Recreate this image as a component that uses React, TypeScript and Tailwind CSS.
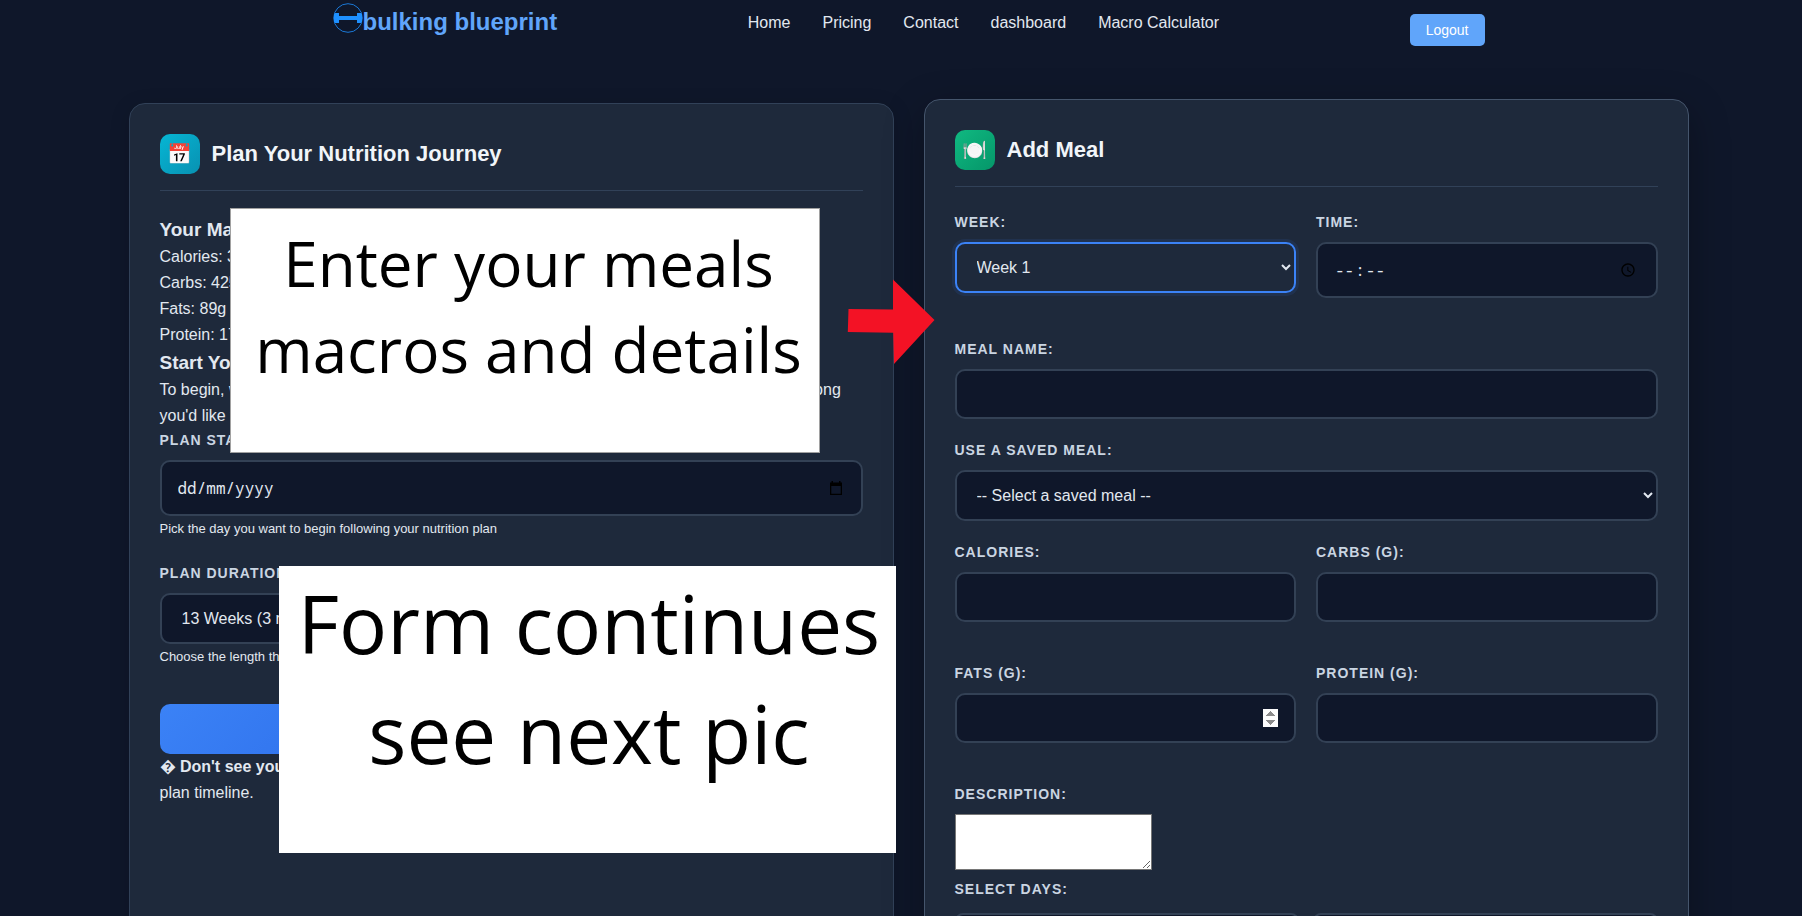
import type { ReactNode } from "react";

const fieldBase =
  "block w-full rounded-[10px] border-2 border-[#334155] bg-[#0f172a] px-4 text-base text-slate-200 outline-none";

const navLinks = ["Home", "Pricing", "Contact", "dashboard", "Macro Calculator"];
const days = ["Monday", "Tuesday", "Wednesday", "Thursday", "Friday", "Saturday", "Sunday"];

function Logo() {
  return (
    <svg width="30" height="30" viewBox="0 0 30 30" fill="none" aria-hidden="true">
      <circle cx="15" cy="15" r="14.3" stroke="#1e90ff" strokeOpacity="0.8" />
      <rect x="5" y="13" width="19" height="4" fill="#1e90ff" />
      <path d="M2 10h4v10H2zM24 10h4v10h-4zM1 11h1v8H1zM28 11h1v8h-1z" fill="#1e90ff" />
    </svg>
  );
}

function CalendarIcon() {
  return (
    <svg width="14" height="15" viewBox="0 0 14 15" aria-hidden="true">
      <path d="M2.500 0H4v1.500h6V0h1.500v1.500H13V14H1V1.500h1.500zM2.300 5v7.700h9.400V5z" fill="#000" fillRule="evenodd" />
    </svg>
  );
}

function Field({ id, label, children }: { id: string; label: string; children: ReactNode }) {
  return (
    <div className="mb-5">
      <label
        htmlFor={id}
        className="mb-2 block text-sm leading-[23px] font-semibold tracking-[1px] text-slate-300 uppercase"
      >
        {label}
      </label>
      {children}
    </div>
  );
}

function CardHeader({ icon, title, tint }: { icon: string; title: string; tint: string }) {
  return (
    <div className="mb-6 flex items-center gap-3 border-b border-slate-700 pb-4">
      <span className={`flex size-10 items-center justify-center rounded-[10px] bg-linear-135 text-xl ${tint}`}>
        {icon}
      </span>
      <h2 className="text-[22px] leading-7 font-semibold text-slate-100">{title}</h2>
    </div>
  );
}

function PlanCard() {
  return (
    <section className="rounded-2xl border border-slate-700 bg-[#1e293b] p-[30px] shadow-[0_4px_20px_rgba(0,0,0,0.15)]">
      <CardHeader icon="📅" title="Plan Your Nutrition Journey" tint="from-[#06b6d4] to-[#0891b2]" />

      <h3 className="text-[19px] leading-[29px] font-bold">Your Macro Targets</h3>
      <p>Calories: 3200</p>
      <p>Carbs: 425g</p>
      <p>Fats: 89g</p>
      <p>Protein: 175g</p>
      <h3 className="text-[19px] leading-[29px] font-bold">Start Your Plan</h3>
      <p>
        To begin, we need to know when you want to start following your nutrition plan and just how long
        you'd like your plan to last.
      </p>

      <Field id="start" label="Plan Start Date:">
        <div className="flex h-14 items-center rounded-[10px] border-2 border-[#334155] bg-[#0f172a] pr-[18px] pl-4">
          <input
            id="start"
            type="text"
            placeholder="dd/mm/yyyy"
            className="min-w-0 flex-1 bg-transparent font-['Noto_Sans_Mono','DejaVu_Sans_Mono',monospace] text-base text-slate-200 outline-none placeholder:text-slate-200"
          />
          <CalendarIcon />
        </div>
        <small className="block text-[13px] leading-[26px]">
          Pick the day you want to begin following your nutrition plan
        </small>
      </Field>
      <Field id="duration" label="Plan Duration:">
        <select id="duration" className={`${fieldBase} h-[51px]`}>
          <option>13 Weeks (3 months)</option>
          <option>26 Weeks (6 months)</option>
        </select>
        <small className="block text-[13px] leading-[26px]">Choose the length that suits your goals</small>
      </Field>

      <button
        type="button"
        className="mt-[34px] block h-[50px] w-full rounded-[10px] bg-linear-135 from-[#3b82f6] to-[#1d4ed8] font-semibold text-white"
      >
        Save Plan
      </button>
      <p>
        � <strong>Don't see your meals yet?</strong> Pick a start date and save it first, then add meals to your own
        plan&nbsp;timeline.
      </p>
    </section>
  );
}

function AddMealCard() {
  return (
    <section className="-translate-y-1 rounded-2xl border border-slate-600 bg-[#1e293b] p-[30px] shadow-[0_12px_40px_rgba(0,0,0,0.3)]">
      <CardHeader icon="🍽️" title="Add Meal" tint="from-[#10b981] to-[#059669]" />

      <div className="mb-5 grid grid-cols-2 gap-x-5">
        <Field id="week" label="Week:">
          <select
            id="week"
            className="block h-[51px] w-full rounded-[10px] border-2 border-[#3b82f6] bg-[#1e293b] px-4 text-base text-slate-200 shadow-[0_0_0_3px_rgba(59,130,246,0.1)] outline-none"
          >
            <option>Week 1</option>
            <option>Week 2</option>
          </select>
        </Field>
        <Field id="time" label="Time:">
          <input
            id="time"
            type="time"
            className={`${fieldBase} h-14 font-['Noto_Sans_Mono','DejaVu_Sans_Mono',monospace] [&::-webkit-datetime-edit-ampm-field]:hidden`}
          />
        </Field>
      </div>

      <Field id="meal-name" label="Meal Name:">
        <input id="meal-name" type="text" className={`${fieldBase} h-[50px]`} />
      </Field>
      <Field id="saved-meal" label="Use a Saved Meal:">
        <select id="saved-meal" className={`${fieldBase} h-[51px]`}>
          <option>-- Select a saved meal --</option>
        </select>
      </Field>

      <div className="mb-5 grid grid-cols-2 gap-x-5">
        <Field id="calories" label="Calories:">
          <input id="calories" type="number" className={`${fieldBase} h-[50px]`} />
        </Field>
        <Field id="carbs" label="Carbs (g):">
          <input id="carbs" type="number" className={`${fieldBase} h-[50px]`} />
        </Field>
      </div>
      <div className="mb-5 grid grid-cols-2 gap-x-5">
        <Field id="fats" label="Fats (g):">
          <input
            id="fats"
            type="number"
            className={`${fieldBase} h-[50px] [&::-webkit-inner-spin-button]:opacity-100`}
          />
        </Field>
        <Field id="protein" label="Protein (g):">
          <input id="protein" type="number" className={`${fieldBase} h-[50px]`} />
        </Field>
      </div>

      <label
        htmlFor="description"
        className="mb-2 block text-sm leading-[23px] font-semibold tracking-[1px] text-slate-300 uppercase"
      >
        Description:
      </label>
      <textarea id="description" className="mb-2 block h-14 w-[197px] border border-[#767676] bg-white text-black" />

      <fieldset>
        <legend className="mb-3 text-sm leading-[23px] font-semibold tracking-[1px] text-slate-300 uppercase">
          Select Days:
        </legend>
        <div className="grid grid-cols-2 gap-3.5">
          {days.map((day) => (
            <label
              key={day}
              className="flex items-center gap-2 rounded-lg border-2 border-[#334155] bg-[#0f172a] px-4 py-3"
            >
              <input type="checkbox" />
              {day}
            </label>
          ))}
        </div>
      </fieldset>
    </section>
  );
}

export default function App() {
  return (
    <div className="h-screen overflow-x-hidden overflow-y-auto bg-[#0f172a] pl-[15px] font-['Liberation_Sans',Arial,sans-serif] text-base leading-[26px] text-slate-200 [scrollbar-width:none]">
      <header className="mx-auto flex max-w-[1152px] items-start justify-between pt-[3px] pb-[57px]">
        <a href="#" className="flex items-start text-2xl leading-[38px] font-bold text-[#60a5fa]">
          <Logo />
          bulking blueprint
        </a>
        <nav className="flex gap-8 leading-10">
          {navLinks.map((link) => (
            <a key={link} href="#">
              {link}
            </a>
          ))}
        </nav>
        <button type="button" className="mt-[11px] h-8 rounded-[5px] bg-[#60a5fa] px-4 text-sm text-white">
          Logout
        </button>
      </header>

      <main className="relative mx-auto grid max-w-[1560px] grid-cols-2 gap-[30px]">
        <PlanCard />
        <AddMealCard />

        {/* Instruction notes pinned over the form */}
        <div className="absolute top-[105px] left-[101px] h-[245px] w-[590px] border border-neutral-400 bg-white pt-[11px] pl-2 text-center font-['Open_Sans','Noto_Sans',sans-serif] text-[62px] leading-[86px] whitespace-nowrap text-black">
          Enter your meals
          <br />
          macros and details
        </div>
        <div className="absolute top-[463px] left-[150px] h-[287px] w-[617px] bg-white pt-0.5 pl-1 text-center font-['Open_Sans','Noto_Sans',sans-serif] text-[80px] leading-[110px] whitespace-nowrap text-black">
          Form continues
          <br />
          see next pic
        </div>
        <svg
          className="absolute top-[176px] left-[718px]"
          width="90"
          height="88"
          viewBox="0 0 90 88"
          aria-hidden="true"
        >
          <path d="M1.5 30 46 30.500 46 .5 87.500 41 47 85 46.200 53.700.8 53z" fill="#f31225" />
        </svg>
      </main>
    </div>
  );
}
